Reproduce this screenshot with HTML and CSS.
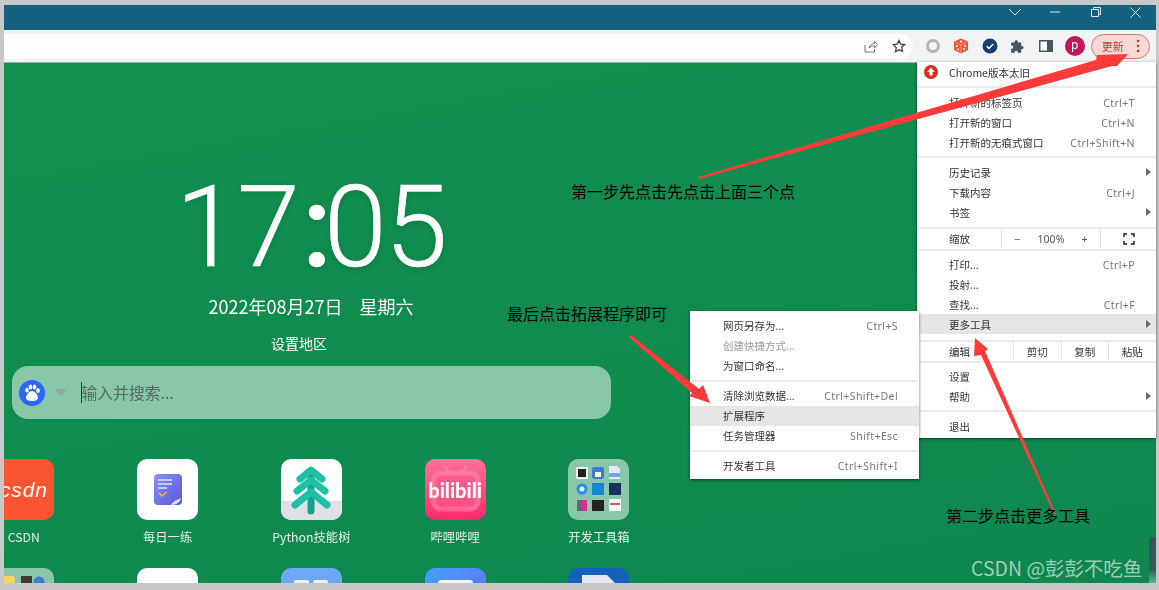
FILE: index.html
```html
<!DOCTYPE html>
<html lang="zh">
<head>
<meta charset="utf-8">
<title>Chrome 扩展程序</title>
<link rel="stylesheet" href="styles.css">
</head>
<body>
<div class="page">
  <div class="frame">
    <header class="titlebar soft">
      <div class="winctl"><svg viewBox="0 0 14 8" width="14" height="8"><path d="M1 1l6 6 6-6" class="line"/></svg></div>
      <div class="winctl"><svg viewBox="0 0 10 2" width="10" height="2"><path d="M0 1h10" class="line"/></svg></div>
      <div class="winctl"><svg viewBox="0 0 10 10" width="10" height="10"><path d="M.5 2.500h7v7h-7zM2.500 2.500v-2h7v7h-2" class="line"/></svg></div>
      <div class="winctl"><svg viewBox="0 0 11 11" width="11" height="11"><path d="M.5.5l10 10M10.500.5l-10 10" class="line"/></svg></div>
    </header>
    <div class="toolbar soft">
      <div class="omnibox">
        <svg class="omni-icon" viewBox="0 0 14 14" width="14" height="14"><path d="M1 6v7h9.500V10M5 9c.5-3 3-4.500 5.500-4.500V2l3 3.500-3 3.500V6.800C8.500 6.800 6.500 7.500 5 9z" class="gray-line"/></svg>
        <svg class="omni-icon star" viewBox="0 0 14 14" width="14" height="14"><path d="M7 1.500l1.700 3.600 3.900.5-2.900 2.700.8 3.900L7 10.800 3.500 12.700l.8-3.900L1.400 5.600l3.900-.5z" class="dark-line"/></svg>
      </div>
      <div class="tbicons">
        <div class="tbicon"><svg viewBox="0 0 16 16" width="16" height="16"><circle cx="8" cy="8" r="5.500" fill="none" stroke="#b4b4b4" stroke-width="3"/></svg></div>
        <div class="tbicon"><svg viewBox="0 0 16 16" width="16" height="16"><path d="M8 .5l7 3v8.500l-7 3.500-7-3.500V3.500z" fill="#f4523b"/><path d="M8 7l7-3.500M8 7L1 3.500M8 7v8.500" stroke="#ffd0c8" stroke-width=".5"/><circle cx="8" cy="3.600" r="1.100" fill="#fff"/><circle cx="4" cy="8" r="1" fill="#fff"/><circle cx="5" cy="11.500" r="1" fill="#fff"/><circle cx="12" cy="8" r="1" fill="#fff"/><circle cx="11" cy="11" r="1" fill="#fff"/></svg></div>
        <div class="tbicon"><svg viewBox="0 0 16 16" width="16" height="16"><circle cx="8" cy="8" r="7.500" fill="#163f73"/><path d="M4.800 8.200l2.200 2.200 4.200-4.400" fill="none" stroke="#fff" stroke-width="1.500"/></svg></div>
        <div class="tbicon"><svg viewBox="0 0 14 14" width="16" height="16"><path d="M1 4h3c-.6-2.600 3.400-2.600 2.800 0h3v3c2.700-.6 2.700 3.400 0 2.800V13H6.800c.5-2.500-3.300-2.500-2.800 0H1V9.500c2.500.5 2.500-3.300 0-2.800z" fill="#44575a"/></svg></div>
        <div class="tbicon"><svg viewBox="0 0 14 12" width="14" height="12"><rect x=".75" y=".75" width="12.500" height="10.500" fill="#fff" stroke="#44575a" stroke-width="1.500"/><rect x="8" y="1" width="5" height="10" fill="#44575a"/></svg></div>
        <div class="tbicon"><span class="avatar">p</span></div>
      </div>
      <div class="update"><span>更新</span><svg viewBox="0 0 4 14" width="4" height="14"><circle cx="2" cy="2" r="1.300" fill="#c5392f"/><circle cx="2" cy="7" r="1.300" fill="#c5392f"/><circle cx="2" cy="12" r="1.300" fill="#c5392f"/></svg></div>
    </div>
    <main class="content">
      <section class="newtab soft">
        <div class="clock">17<span class="colon">:</span>05</div>
        <div class="date"><span>2022年08月27日</span><span>星期六</span></div>
        <div class="region">设置地区</div>
        <div class="search">
          <svg class="engine" viewBox="0 0 26 26" width="26" height="26"><circle cx="13" cy="13" r="13" fill="#2d65f6"/><ellipse cx="8" cy="10" rx="1.800" ry="2.500" fill="#fff"/><ellipse cx="11.500" cy="7" rx="1.800" ry="2.500" fill="#fff"/><ellipse cx="15.500" cy="7" rx="1.800" ry="2.500" fill="#fff"/><ellipse cx="19" cy="10.500" rx="1.800" ry="2.500" fill="#fff"/><path d="M13 11c3 0 6 4 6 7 0 2-2 3-6 3s-6-1-6-3c0-3 3-7 6-7z" fill="#fff"/></svg>
          <span class="caret-down"></span>
          <span class="cursor"></span>
          <span class="placeholder">输入并搜索...</span>
        </div>
        <div class="apps">
          <div class="app"><div class="tile tile-csdn"><span>csdn</span></div><div class="label">CSDN</div></div>
          <div class="app"><div class="tile tile-white"><svg viewBox="0 0 61 61" width="61" height="61"><defs><linearGradient id="task" x1="0" y1="0" x2="1" y2="1"><stop offset="0" stop-color="#8690f2"/><stop offset="1" stop-color="#5a58d6"/></linearGradient></defs><rect x="17" y="15" width="28" height="31" rx="4" fill="url(#task)"/><path d="M21 21h14M21 25h14M21 29h9" stroke="#dfe3ff" stroke-width="1.500"/><path d="M22 34l3 3 5-4" fill="none" stroke="#f4b33d" stroke-width="1.500"/><path d="M34 46c6 0 9-3 10-7-4 2-8 3-10 7z" fill="#d9dcfb"/></svg></div><div class="label">每日一练</div></div>
          <div class="app"><div class="tile tile-tree"><svg viewBox="0 0 61 61" width="61" height="61"><path d="M0 42h61v19H0z" fill="#e0e0e8"/><path d="M30 16v36" stroke="#17a08c" stroke-width="7" stroke-linecap="round"/><path d="M19 20l11-9 11 9M16 32l14-11 14 11M14 46l16-13 16 13" fill="none" stroke="#1fbfa5" stroke-width="7" stroke-linecap="round" stroke-linejoin="round"/></svg></div><div class="label">Python技能树</div></div>
          <div class="app"><div class="tile tile-bili"><svg class="tv" viewBox="0 0 61 61" width="61" height="61"><path d="M19 7l6 7M42 7l-6 7" stroke="#ff8fb0" stroke-width="3"/><rect x="8" y="14" width="45" height="36" rx="8" fill="#ff5f8e" stroke="#ff8fb0" stroke-width="5"/></svg><span>bilibili</span></div><div class="label">哔哩哔哩</div></div>
          <div class="app"><div class="tile tile-folder"><svg viewBox="0 0 61 61" width="61" height="61"><rect x="8" y="8" width="12" height="12" fill="#eee"/><rect x="10" y="10" width="8" height="8" fill="#222"/><rect x="24" y="8" width="12" height="12" rx="2" fill="#3b7bd6"/><rect x="27" y="13" width="6" height="5" fill="#fff"/><path d="M41 7h8l3 3v10H41z" fill="#dfe8f5"/><rect x="41" y="14" width="11" height="4" fill="#6aa6f5"/><circle cx="14" cy="30" r="5.500" fill="#2b8cf0"/><circle cx="14" cy="30" r="2.500" fill="#dff"/><rect x="24" y="24" width="12" height="12" fill="#1389d6"/><rect x="41" y="24" width="12" height="12" fill="#16335f"/><rect x="9" y="41" width="5" height="11" fill="#666"/><rect x="14" y="41" width="5" height="11" fill="#e02a9b"/><rect x="24" y="41" width="12" height="11" fill="#222"/><rect x="41" y="40" width="12" height="12" fill="#f6f6f6"/><path d="M42 45h10" stroke="#a33" stroke-width="1.500"/></svg></div><div class="label">开发工具箱</div></div>
          <div class="app"><div class="tile tile-folder"><svg viewBox="0 0 61 61" width="61" height="61"><rect x="10" y="8" width="12" height="12" rx="2" fill="#f6d65c"/><rect x="28" y="8" width="11" height="12" fill="#4a3535"/><circle cx="46" cy="14" r="5.500" fill="#3b7bd6"/></svg></div></div>
          <div class="app"><div class="tile tile-white"></div></div>
          <div class="app"><div class="tile tile-sky"><svg viewBox="0 0 61 61" width="61" height="61"><rect x="13" y="12" width="15" height="18" rx="2" fill="#eef3ff"/><rect x="32" y="12" width="15" height="18" rx="2" fill="#eef3ff"/></svg></div></div>
          <div class="app"><div class="tile tile-grad"><svg viewBox="0 0 61 61" width="61" height="61"><rect x="13" y="12" width="35" height="20" rx="3" fill="#eef3ff"/></svg></div></div>
          <div class="app"><div class="tile tile-doc"><svg viewBox="0 0 61 61" width="61" height="61"><path d="M14 7h25l9 9v30H14z" fill="#e6e8f0"/></svg></div></div>
        </div>
      </section>
    </main>
  </div>

  <nav class="menu main-menu soft">
    <div class="item"><svg class="up" viewBox="0 0 14 14" width="14" height="14"><circle cx="7" cy="7" r="7" fill="#d42e22"/><path d="M7 2.800l3.800 4H8.600v3.600H5.400V6.800H3.200z" fill="#fff"/></svg><span>Chrome版本太旧</span></div>
    <div class="sep"></div>
    <div class="item"><span>打开新的标签页</span><kbd>Ctrl+T</kbd></div>
    <div class="item"><span>打开新的窗口</span><kbd>Ctrl+N</kbd></div>
    <div class="item"><span>打开新的无痕式窗口</span><kbd>Ctrl+Shift+N</kbd></div>
    <div class="sep"></div>
    <div class="item"><span>历史记录</span><i class="more"></i></div>
    <div class="item"><span>下载内容</span><kbd>Ctrl+J</kbd></div>
    <div class="item"><span>书签</span><i class="more"></i></div>
    <div class="split zoom">
      <span class="split-label zoom-label">缩放</span>
      <div class="zoom-ctl"><span>−</span><span>100%</span><span>+</span></div>
      <div class="zoom-full"><svg viewBox="0 0 12 12" width="12" height="12"><path d="M1 4V1h3M8 1h3v3M11 8v3H8M4 11H1V8" fill="none" stroke="#222" stroke-width="1.500"/></svg></div>
    </div>
    <div class="item"><span>打印...</span><kbd>Ctrl+P</kbd></div>
    <div class="item"><span>投射...</span></div>
    <div class="item"><span>查找...</span><kbd>Ctrl+F</kbd></div>
    <div class="item active"><span>更多工具</span><i class="more"></i></div>
    <div class="split edit">
      <span class="split-label edit-label">编辑</span>
      <span class="edit-btn">剪切</span><span class="edit-btn">复制</span><span class="edit-btn">粘贴</span>
    </div>
    <div class="item"><span>设置</span></div>
    <div class="item"><span>帮助</span><i class="more"></i></div>
    <div class="sep"></div>
    <div class="item"><span>退出</span></div>
  </nav>

  <nav class="menu sub-menu soft">
    <div class="item"><span>网页另存为...</span><kbd>Ctrl+S</kbd></div>
    <div class="item disabled"><span>创建快捷方式...</span></div>
    <div class="item"><span>为窗口命名...</span></div>
    <div class="sep"></div>
    <div class="item"><span>清除浏览数据...</span><kbd>Ctrl+Shift+Del</kbd></div>
    <div class="item active"><span>扩展程序</span></div>
    <div class="item"><span>任务管理器</span><kbd>Shift+Esc</kbd></div>
    <div class="sep"></div>
    <div class="item"><span>开发者工具</span><kbd>Ctrl+Shift+I</kbd></div>
  </nav>

  <div class="meter"></div>

  <svg class="arrows" viewBox="0 0 1159 590" width="1159" height="590">
    <path d="M698 177L1096 60 1097 55 1128 54 1117 66 1112 66 699 179z"/>
    <path d="M1056 514L985 351 988 349 975 338 974 356 981 355 1054 514z"/>
    <path d="M629 337L692 393 689 396 710 403 703 385 699 389 631 335z"/>
  </svg>

  <div class="note note-one">第一步先点击先点击上面三个点</div>
  <div class="note note-two">最后点击拓展程序即可</div>
  <div class="note note-three">第二步点击更多工具</div>
  <div class="watermark">CSDN @彭彭不吃鱼</div>
</div>
</body>
</html>
```
FILE: styles.css
```css
* { box-sizing: border-box; }
html, body { margin: 0; padding: 0; }
body { font-family: "Noto Sans CJK SC", "Noto Sans", sans-serif; overflow: hidden; }
.page { position: relative; width: 1159px; height: 590px; background: #c8c8c8; padding: 5px 3px 7px 4px; overflow: hidden; }
.frame { display: flex; flex-direction: column; height: 100%; }
.soft { filter: blur(.35px); }

.titlebar { height: 25px; flex: none; background: #14617f; display: flex; justify-content: flex-end; }
.winctl { width: 40.330px; height: 100%; display: flex; align-items: center; justify-content: center; padding-bottom: 11px; }
.line { fill: none; stroke: #dfe9ee; stroke-width: 1; }

.toolbar { height: 33px; flex: none; background: #f1f3f4; border-bottom: 1px solid #9fb0a6; display: flex; align-items: center; }
.omnibox { width: 909px; height: 25px; flex: none; background: #fdfdfd; border-radius: 0 13px 13px 0; display: flex; align-items: center; justify-content: flex-end; padding-right: 7px; gap: 14px; }
.omni-icon { flex: none; }
.gray-line { fill: none; stroke: #777; stroke-width: 1; }
.dark-line { fill: none; stroke: #444; stroke-width: 1.300; }
.tbicons { display: flex; margin-left: 6px; }
.tbicon { width: 28.300px; height: 28px; display: flex; align-items: center; justify-content: center; }
.avatar { width: 20px; height: 20px; border-radius: 50%; background: #c2185b; color: #fff; font: 12px/18px "Noto Sans", sans-serif; text-align: center; }
.update { margin-left: 2px; width: 59px; height: 25px; border: 1px solid #da7a72; border-radius: 13px; background: #f7d8d4; color: #c5392f; font-size: 11px; display: flex; align-items: center; padding-left: 10px; gap: 12px; }

.content { flex: 1; min-height: 0; overflow: hidden; background: linear-gradient(170deg, #11904f 0%, #0f8b4e 60%, #0e874f 100%); }
.newtab { width: 614px; display: flex; flex-direction: column; align-items: center; color: #fff; padding-top: 106px; }
.clock { font-family: Roboto, sans-serif; font-weight: 300; font-size: 113px; line-height: 118px; letter-spacing: -1.500px; -webkit-text-stroke: .6px #fff; text-shadow: 0 2px 6px rgba(0,0,0,.15); white-space: nowrap; }
.colon { font-weight: 500; letter-spacing: -8px; padding-left: 4px; }
.date { margin-top: 7px; font-size: 18px; line-height: 24px; display: flex; gap: 17px; }
.region { margin-top: 15px; margin-right: 24px; font-size: 14px; line-height: 20px; }
.search { margin-top: 13px; width: 599px; height: 53px; flex: none; border-radius: 16px; background: #88c7a8; display: flex; align-items: center; padding-left: 7px; }
.engine { flex: none; }
.caret-down { width: 0; height: 0; margin-left: 10px; border: 6px solid transparent; border-top: 7px solid #9b9fa8; border-bottom: 0; }
.cursor { width: 1px; height: 21px; margin-left: 14px; background: #333; }
.placeholder { font-size: 15.800px; color: #586a62; }
.apps { margin-top: 40px; align-self: flex-start; margin-left: -52px; display: grid; grid-template-columns: repeat(5, 143.750px); row-gap: 24px; }
.app { display: flex; flex-direction: column; align-items: center; }
.tile { width: 61px; height: 61px; border-radius: 10px; overflow: hidden; position: relative; display: flex; align-items: center; justify-content: center; }
.label { margin-top: 10px; height: 14px; font-size: 12.300px; line-height: 14px; color: rgba(255,255,255,.88); white-space: nowrap; }
.tile-csdn { background: #fc5531; }
.tile-csdn span { font: italic 21px/1 "Liberation Sans", sans-serif; color: #fff; letter-spacing: 1px; }
.tile-white { background: #fff; }
.tile-tree { background: #fff; }
.tile-bili { background: linear-gradient(#ff7098, #ff2a6d); }
.tile-bili span { position: relative; font: 900 20px/1 Lato, sans-serif; color: #fff; }
.tv { position: absolute; left: 0; top: 0; opacity: .55; }
.tile-folder { background: #88c7a8; }
.tile-sky { background: #6fa8f8; }
.tile-grad { background: linear-gradient(120deg, #3fa0f8, #6a70ff); }
.tile-doc { background: #1560bd; }

.menu { position: absolute; background: #fff; color: #333; font-size: 10.500px; box-shadow: 0 1px 3px rgba(0,0,0,.55); }
.main-menu { left: 917px; top: 62px; width: 239px; height: 376px; padding: 0; }
.sub-menu { left: 690px; top: 311px; width: 229px; height: 168px; padding: 5px 0 3px; }
.item { height: 20px; display: flex; align-items: center; justify-content: space-between; position: relative; }
.main-menu .item { padding: 0 21px 0 32px; }
.sub-menu .item { padding: 0 21px 2px 33px; }
.item.active { background: #e6e6e6; }
.item.disabled { color: #9a9a9a; }
.item kbd { margin-top: 2px; font: 10.500px "Noto Sans", sans-serif; letter-spacing: .4px; color: #767676; }
.more { position: absolute; right: 5px; top: 6px; width: 0; height: 0; border: 4px solid transparent; border-left: 5px solid #666; border-right: 0; }
.up { position: absolute; left: 7px; top: 3px; }
.sep { height: 10px; display: flex; align-items: center; }
.sep::after { content: ""; flex: 1; height: 2px; background: #ebebeb; }
.sub-menu .sep::after { margin: 0 1px; }
.split { display: flex; align-items: center; border-top: 2px solid #ebebeb; border-bottom: 2px solid #ebebeb; }
.zoom { height: 24px; margin: 5px 0 3px; }
.edit { height: 23px; margin: 6px 0 3px; }
.split-label { padding-left: 32px; height: 100%; line-height: 20px; flex: none; }
.zoom-label { width: 84px; }
.zoom-ctl { width: 100px; height: 100%; border-left: 1px solid #e2e2e2; border-right: 1px solid #e2e2e2; display: flex; align-items: center; justify-content: space-around; padding: 0 4px; font-family: "Noto Sans", sans-serif; color: #555; }
.zoom-full { flex: 1; height: 100%; display: flex; align-items: center; justify-content: center; }
.edit-label { width: 96px; }
.edit-btn { width: 47.500px; height: 100%; line-height: 20px; text-align: center; border-left: 1px solid #e2e2e2; }

.meter { position: absolute; left: 1149px; top: 537px; width: 7px; height: 46px; border-radius: 3px 0 0 0; background: linear-gradient(#2e5b57 70%, #5fb58d); }
.arrows { position: absolute; left: 0; top: 0; pointer-events: none; }
.arrows path { fill: #fe3a3a; }
.note { position: absolute; font-size: 16px; line-height: 20px; color: #000; white-space: nowrap; }
.note-one { left: 571px; top: 181px; }
.note-two { left: 507px; top: 303px; }
.note-three { left: 946px; top: 505px; }
.watermark { position: absolute; left: 971px; top: 555px; font-size: 19.500px; line-height: 26px; color: rgba(255,255,255,.6); white-space: nowrap; }
```
